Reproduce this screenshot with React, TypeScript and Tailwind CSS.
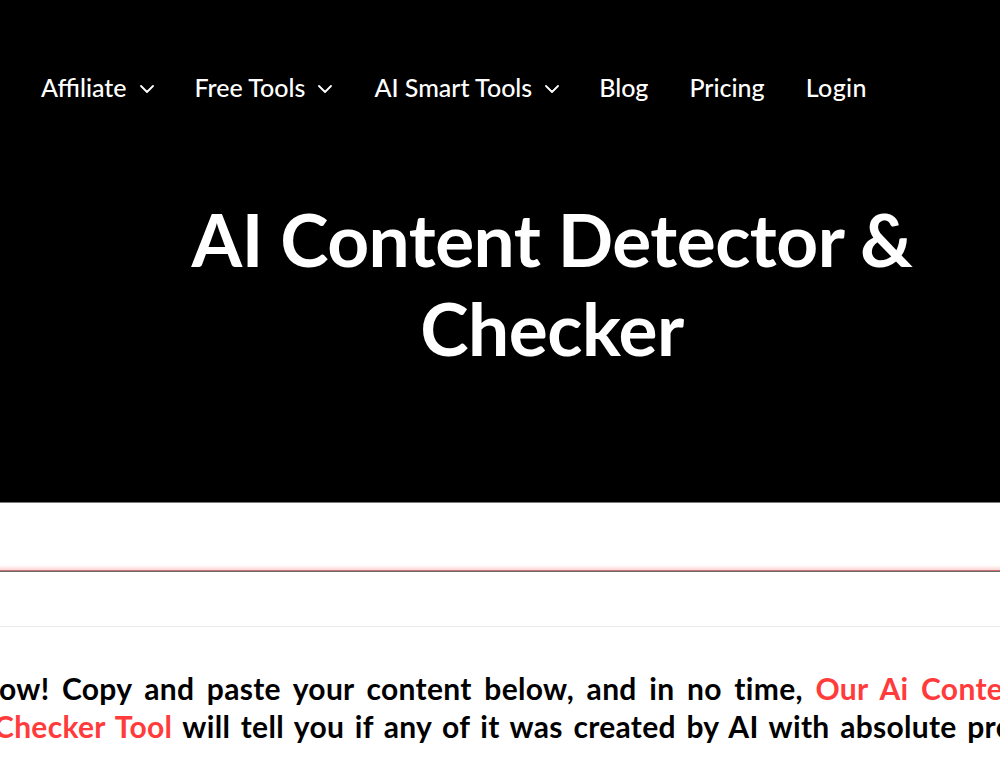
import React from "react";

const Chevron = () => (
  <svg width="14" height="8" viewBox="0 0 14 8" fill="none" className="ml-[13px] mt-[2px]">
    <path d="M1 1l6 6 6-6" stroke="white" strokeWidth="1.8" strokeLinecap="round" strokeLinejoin="round" />
  </svg>
);

export default function App() {
  const font = { fontFamily: "Lato, 'Liberation Sans', sans-serif" };
  return (
    <div className="w-[1000px] h-[781px] overflow-hidden bg-white relative" style={font}>
      <header className="bg-black h-[503px] border-b border-[#7a7a7a] flex flex-col">
        <nav className="flex items-center h-[40px] mt-[68px] pl-[41px] text-white text-[25px] font-medium">
          <div className="flex items-center">Affiliate<Chevron /></div>
          <div className="flex items-center ml-[41px]">Free Tools<Chevron /></div>
          <div className="flex items-center ml-[42px]">AI Smart Tools<Chevron /></div>
          <div className="ml-[40px]">Blog</div>
          <div className="ml-[41px]">Pricing</div>
          <div className="ml-[41px] tracking-[0.4px]">Login</div>
        </nav>
        <h1 className="mt-[87px] pl-[104px] text-center text-white font-bold text-[73px] leading-[89px] tracking-[-0.5px]">
          AI Content Detector &amp;
          <br />
          Checker
        </h1>
      </header>
      <div className="h-[62px] bg-white" />
      <div className="h-[5px] bg-gradient-to-b from-white to-[#fdd6d6]" />
      <div className="h-[1px] bg-[#c87474]" />
      <div className="h-[1px] bg-[#6a6a6a]" />
      <div className="h-[55px] bg-white border-b border-[#ebebeb]" />
      <div className="pt-[42px] text-black font-bold text-[30px] leading-[38px] whitespace-nowrap tracking-[0.3px]">
        <div className="ml-[-1px] [word-spacing:5px]">
          ow! Copy and paste your content below, and in no time,{" "}
          <span className="text-[#ff3b3b]">Our Ai Content Detector &amp;</span>
        </div>
        <div className="ml-[-6px] [word-spacing:3px]">
          <span className="text-[#ff3b3b]">Checker Tool</span> will tell you if any of it was created by AI with absolute precision.
        </div>
      </div>
    </div>
  );
}
